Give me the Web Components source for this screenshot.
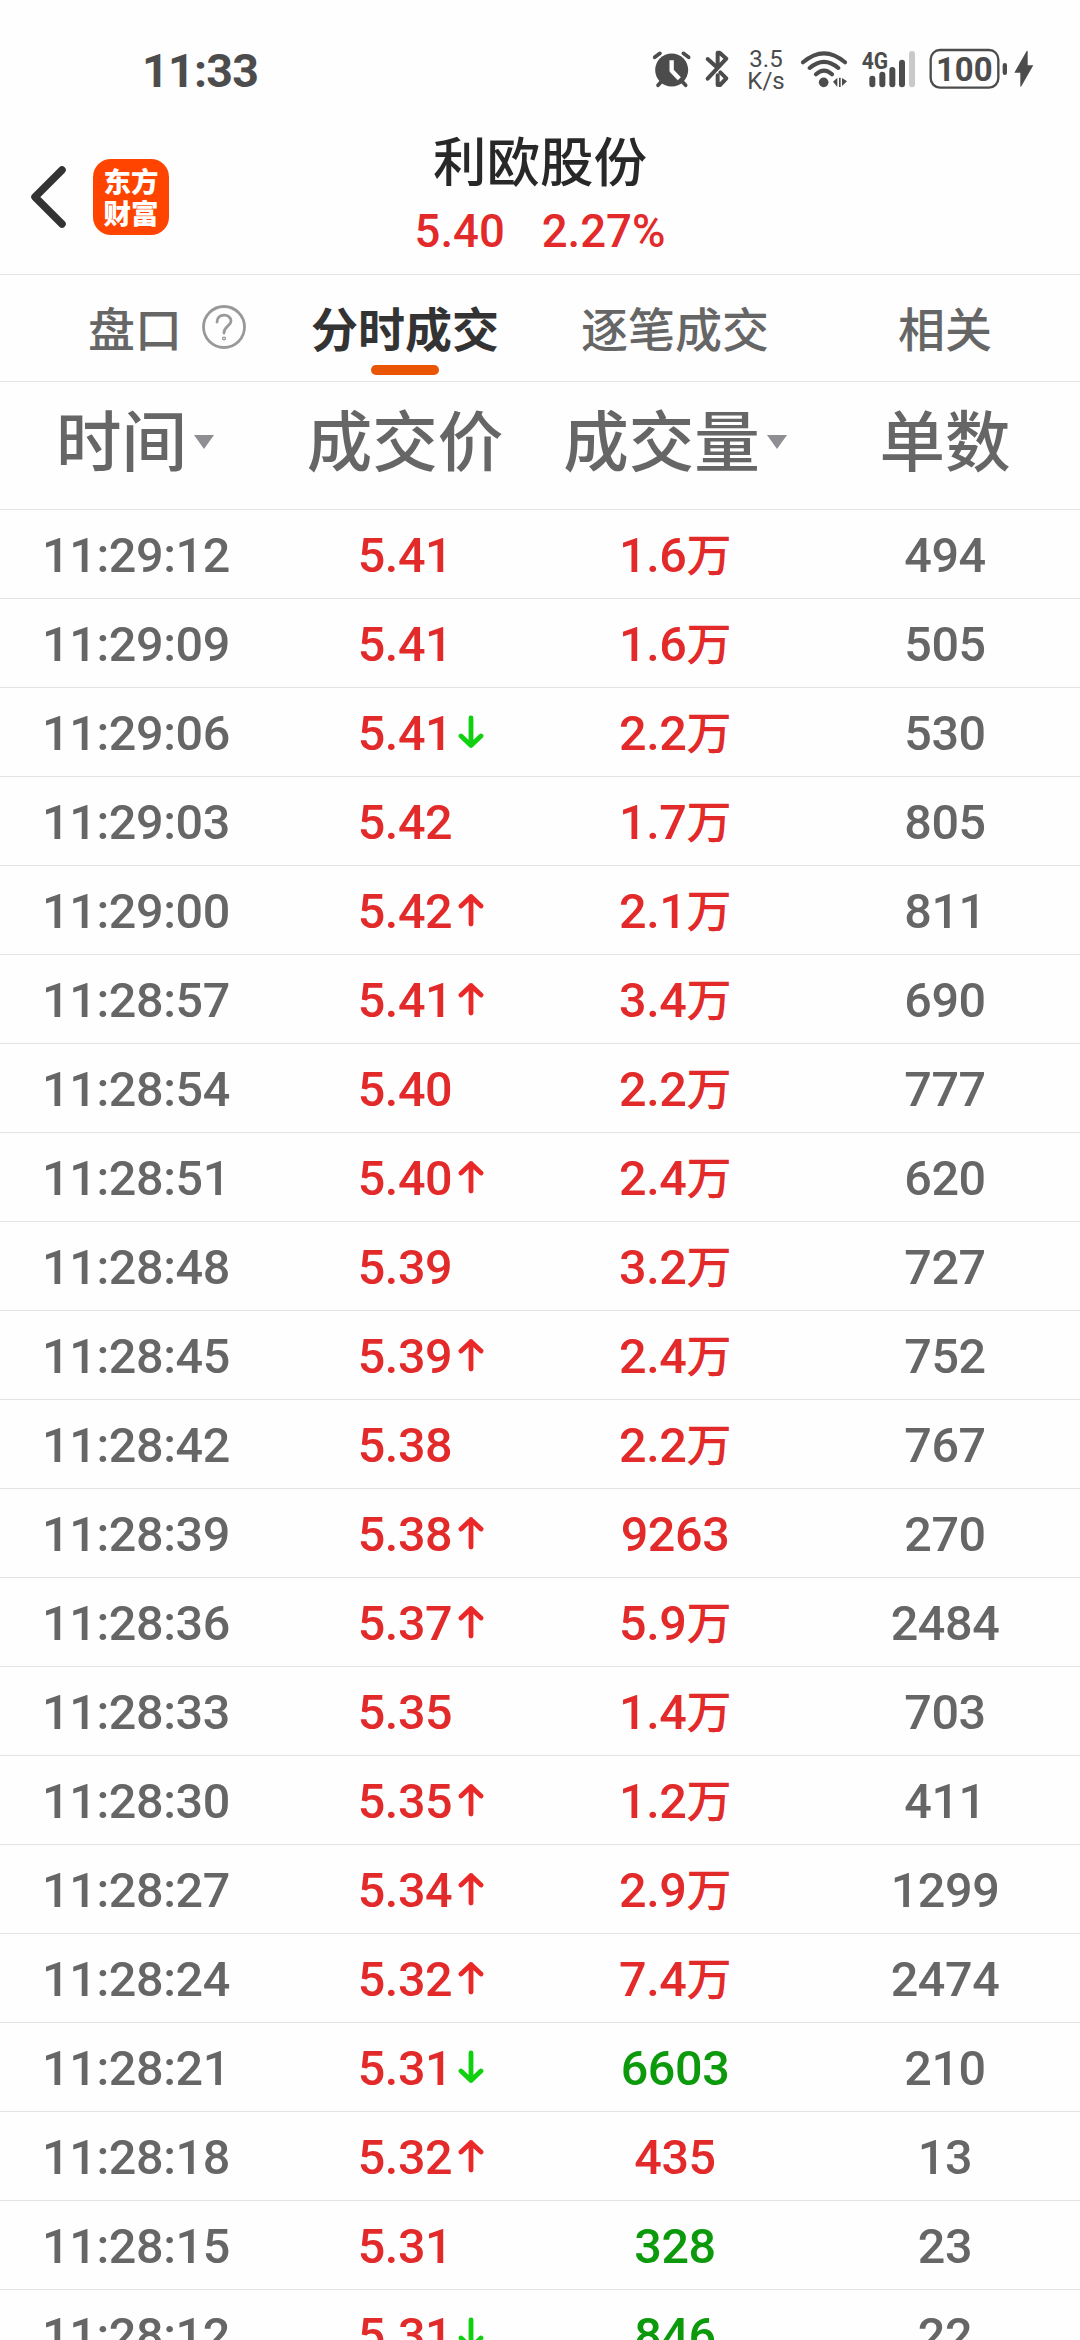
<!DOCTYPE html>
<html lang="zh-CN">
  <head>
    <meta charset="UTF-8" />
    <meta name="viewport" content="width=device-width, initial-scale=1.0" />
    <title>利欧股份 - 分时成交</title>
    <style>
      html,
      body {
        margin: 0;
        height: 2340px;
        overflow: hidden;
        background: #fefefe;
      }

      body {
        font-family: "Noto Sans CJK SC", sans-serif;
        font-weight: 500;
        color: #666;
        --number: Roboto, "Noto Sans CJK SC", sans-serif;
        --line: #e3e3e3;
        --up: #e22a2a;
        --down: #0c990c;
      }
    </style>
  </head>
  <body>
    <template id="status-bar">
      <style>
        :host {
          display: flex;
          box-sizing: border-box;
          height: 116px;
          padding: 46px 45px 22px 142px;
          justify-content: space-between;
          align-items: center;
          color: #4c4c4c;
          font-family: var(--number);
        }

        .clock {
          font-size: 46.5px;
          font-weight: 700;
          line-height: 48px;
          letter-spacing: -0.7px;
          padding-top: 2px;
        }

        .icons {
          display: flex;
          height: 48px;
        }

        .speed {
          display: flex;
          flex-direction: column;
          align-items: center;
          width: 36px;
          padding-top: 2px;
          font-size: 24px;
          font-weight: 400;
          line-height: 22px;
        }

        svg {
          display: block;
          height: 48px;
          fill: currentColor;
        }

        .stroke {
          fill: none;
          stroke: currentColor;
          stroke-linecap: round;
          stroke-linejoin: round;
        }

        text {
          font-weight: 700;
        }
      </style>
      <div class="clock"><slot name="time"></slot></div>
      <div class="icons">
        <!-- alarm -->
        <svg width="40" viewBox="95 48 120 144">
          <path class="stroke" stroke-width="11" d="M103 82L119 70M205 82L189 70M122 156L113 166M187 156L196 166" />
          <circle cx="154" cy="120" r="49.500" />
          <path fill="none" stroke="#fefefe" stroke-width="13" stroke-linejoin="round" d="M154 91V122L177 146" />
        </svg>
        <!-- bluetooth -->
        <svg width="56" viewBox="215 48 168 144">
          <path class="stroke" stroke-width="12" d="M262 87L292 114V68H298L318 86L262 146M300 127L318 145L299 165H292V136" />
        </svg>
        <div class="speed"><span>3.5</span><span>K/s</span></div>
        <!-- wifi -->
        <svg width="78" viewBox="491 48 234 144">
          <path class="stroke" stroke-width="12" d="M548 97Q611 43 674 97M568 114Q611 77 654 114M587 133Q611 111 635 133" />
          <circle cx="610" cy="157" r="14.500" />
          <path d="M638 155L651 143V171ZM656 143H661V171H656ZM665 144L680 154L665 168Z" />
        </svg>
        <!-- mobile signal -->
        <svg width="54" viewBox="725 48 162 144">
          <text x="724" y="116" font-size="69" textLength="79" lengthAdjust="spacingAndGlyphs">4G</text>
          <rect x="747" y="137" width="18" height="35" rx="9" />
          <rect x="777" y="125" width="18" height="47" rx="9" />
          <rect x="807" y="111" width="18" height="61" rx="9" />
          <rect x="836" y="89" width="18" height="83" rx="9" />
          <rect x="866" y="63" width="18" height="109" rx="9" fill="#c9c9c9" />
        </svg>
        <!-- battery -->
        <svg width="98" viewBox="887 48 294 144">
          <rect class="stroke" x="931" y="60" width="203" height="113" rx="28" stroke-width="7" />
          <rect x="1147" y="99" width="13" height="36" rx="6.500" />
          <text x="947" y="153" font-size="99" textLength="170" lengthAdjust="spacingAndGlyphs">100</text>
        </svg>
        <svg width="21" viewBox="1181 48 63 144">
          <path d="M1219 63Q1222 61 1222 66V106H1239L1203 169Q1200 173 1200 167V128H1182Z" />
        </svg>
      </div>
    </template>

    <template id="stock-header">
      <style>
        :host {
          display: grid;
          grid-template-columns: 270px 1fr 270px;
          box-sizing: border-box;
          height: 159px;
          border-bottom: 1px solid var(--line);
        }

        .left {
          display: flex;
          align-items: center;
          gap: 27px;
          padding: 6px 0 0 30px;
          height: 156px;
          box-sizing: border-box;
        }

        .back {
          width: 36px;
          height: 62px;
        }

        .logo {
          display: flex;
          flex-direction: column;
          justify-content: center;
          align-items: center;
          width: 76px;
          height: 76px;
          padding-bottom: 2px;
          box-sizing: border-box;
          border-radius: 18px;
          background: #ff4400;
          color: #fff;
          font-size: 27.5px;
          font-weight: 900;
          line-height: 32px;
        }

        .title {
          text-align: center;
          color: #282828;
          font-size: 53.5px;
          line-height: 60px;
          margin-top: 13px;
        }

        .quote {
          display: flex;
          justify-content: center;
          gap: 37px;
          color: var(--up);
          font-family: var(--number);
          font-size: 45.5px;
          line-height: 60px;
          margin-top: 13px;
        }
      </style>
      <div class="left">
        <svg class="back" viewBox="0 0 36 62">
          <path d="M32 4L5 31L32 58" fill="none" stroke="#333" stroke-width="7.500" stroke-linecap="round" stroke-linejoin="round" />
        </svg>
        <div class="logo"><span>东方</span><span>财富</span></div>
      </div>
      <div>
        <div class="title"><slot></slot></div>
        <div class="quote">
          <slot name="price"></slot>
          <slot name="change"></slot>
        </div>
      </div>
    </template>

    <template id="stock-tabs">
      <style>
        :host {
          display: grid;
          grid-template-columns: repeat(4, 1fr);
          box-sizing: border-box;
          height: 107px;
          border-bottom: 1px solid var(--line);
        }
      </style>
      <slot></slot>
    </template>

    <template id="stock-tab">
      <style>
        :host {
          display: flex;
          flex-direction: column;
          align-items: center;
          font-size: 47px;
          line-height: 60px;
          padding-top: 22px;
        }

        .label {
          display: flex;
          align-items: center;
          gap: 20px;
        }

        .help {
          display: none;
          width: 44px;
          height: 44px;
        }

        :host([help]) {
          padding-left: 64px;
        }

        :host([help]) .help {
          display: block;
        }

        :host([active]) {
          color: #333;
          font-weight: 700;
        }

        :host([active])::after {
          content: "";
          width: 68px;
          height: 10px;
          margin-top: 8px;
          border-radius: 5px;
          background: #ea5504;
        }
      </style>
      <div class="label">
        <slot></slot>
        <svg class="help" viewBox="0 0 44 44" fill="none" stroke="#999" stroke-width="2.800" stroke-linecap="round">
          <circle cx="22" cy="22" r="20.500" />
          <path d="M15 17C15 8 29 8 29 16C29 21 22 21 22 28" />
          <circle cx="22" cy="33.500" r="0.700" />
        </svg>
      </div>
    </template>

    <template id="trade-head">
      <style>
        :host {
          display: grid;
          grid-template-columns: repeat(4, 1fr);
          box-sizing: border-box;
          height: 128px;
          padding-top: 11px;
          border-bottom: 1px solid var(--line);
          font-size: 65.5px;
          line-height: 90px;
        }

        div {
          display: flex;
          justify-content: center;
          align-items: center;
          height: 90px;
        }

        .sort::after {
          content: "";
          margin: 7px 0 0 7px;
          border: 10px solid transparent;
          border-top: 14px solid #8e8e93;
          border-bottom: 0;
        }
      </style>
      <div class="sort">时间</div>
      <div>成交价</div>
      <div class="sort">成交量</div>
      <div>单数</div>
    </template>

    <template id="trade-row">
      <style>
        :host {
          display: grid;
          grid-template-columns: repeat(4, 1fr);
          box-sizing: border-box;
          height: 89px;
          border-bottom: 1px solid var(--line);
          font-family: var(--number);
          font-size: 48.5px;
          letter-spacing: -0.4px;
          line-height: 91px;
          text-align: center;
        }

        .time {
          padding-left: 2px;
        }

        .price {
          display: grid;
          grid-template-columns: 1fr auto 1fr;
          color: var(--up);
        }

        .price span {
          grid-column: 2;
        }

        .volume {
          color: var(--up);
        }

        .volume.sell {
          color: var(--down);
        }

        .unit {
          font-size: 45px;
          line-height: 1;
        }

        svg {
          align-self: center;
          width: 26px;
          height: 34px;
          margin: 0 0 4px 6px;
          fill: none;
          stroke: #ea2828;
          stroke-width: 4.8;
          stroke-linecap: round;
          stroke-linejoin: round;
        }

        svg.down {
          stroke: #10d010;
          transform: rotate(180deg);
        }
      </style>
      <div class="time"></div>
      <div class="price"><span></span></div>
      <div class="volume"></div>
      <div class="count"></div>
    </template>

    <script>
      class BaseElement extends HTMLElement {
        constructor() {
          super();

          this.attachShadow({ mode: "open" }).appendChild(
            document.getElementById(this.localName).content.cloneNode(true)
          );
        }
      }

      class StatusBar extends BaseElement {}
      class StockHeader extends BaseElement {}
      class StockTabs extends BaseElement {}
      class StockTab extends BaseElement {}
      class TradeHead extends BaseElement {}

      class TradeRow extends BaseElement {
        set data([time, price, trend, volume, count, side]) {
          const $ = (s) => this.shadowRoot.querySelector(s);

          $(".time").textContent = time;
          $(".price span").textContent = price;
          $(".volume").innerHTML = volume.replace(
            "万",
            '<span class="unit">万</span>'
          );
          $(".volume").classList.toggle("sell", side === "sell");
          $(".count").textContent = count;

          if (trend) {
            $(".price").insertAdjacentHTML(
              "beforeend",
              `<svg class="${trend}" viewBox="0 0 26 34"><path d="M13 31V3.500M3 13L13 3.500L23 13"/></svg>`
            );
          }
        }
      }

      class TradeList extends HTMLElement {
        constructor() {
          super();

          this.attachShadow({ mode: "open" }).innerHTML =
            "<style>:host { display: block; }</style>";
        }

        set rows(rows) {
          rows.forEach((data) => {
            const row = document.createElement("trade-row");
            row.data = data;
            this.shadowRoot.appendChild(row);
          });
        }
      }

      customElements.define("status-bar", StatusBar);
      customElements.define("stock-header", StockHeader);
      customElements.define("stock-tabs", StockTabs);
      customElements.define("stock-tab", StockTab);
      customElements.define("trade-head", TradeHead);
      customElements.define("trade-row", TradeRow);
      customElements.define("trade-list", TradeList);
    </script>

    <status-bar><span slot="time">11:33</span></status-bar>
    <stock-header>
      利欧股份
      <span slot="price">5.40</span>
      <span slot="change">2.27%</span>
    </stock-header>
    <stock-tabs>
      <stock-tab help>盘口</stock-tab>
      <stock-tab active>分时成交</stock-tab>
      <stock-tab>逐笔成交</stock-tab>
      <stock-tab>相关</stock-tab>
    </stock-tabs>
    <trade-head></trade-head>
    <trade-list></trade-list>

    <script>
      // time, price, trend, volume, count, side
      document.querySelector("trade-list").rows = [
        ["11:29:12", "5.41", "", "1.6万", "494"],
        ["11:29:09", "5.41", "", "1.6万", "505"],
        ["11:29:06", "5.41", "down", "2.2万", "530"],
        ["11:29:03", "5.42", "", "1.7万", "805"],
        ["11:29:00", "5.42", "up", "2.1万", "811"],
        ["11:28:57", "5.41", "up", "3.4万", "690"],
        ["11:28:54", "5.40", "", "2.2万", "777"],
        ["11:28:51", "5.40", "up", "2.4万", "620"],
        ["11:28:48", "5.39", "", "3.2万", "727"],
        ["11:28:45", "5.39", "up", "2.4万", "752"],
        ["11:28:42", "5.38", "", "2.2万", "767"],
        ["11:28:39", "5.38", "up", "9263", "270"],
        ["11:28:36", "5.37", "up", "5.9万", "2484"],
        ["11:28:33", "5.35", "", "1.4万", "703"],
        ["11:28:30", "5.35", "up", "1.2万", "411"],
        ["11:28:27", "5.34", "up", "2.9万", "1299"],
        ["11:28:24", "5.32", "up", "7.4万", "2474"],
        ["11:28:21", "5.31", "down", "6603", "210", "sell"],
        ["11:28:18", "5.32", "up", "435", "13"],
        ["11:28:15", "5.31", "", "328", "23", "sell"],
        ["11:28:12", "5.31", "down", "846", "22", "sell"],
      ];
    </script>
  </body>
</html>
